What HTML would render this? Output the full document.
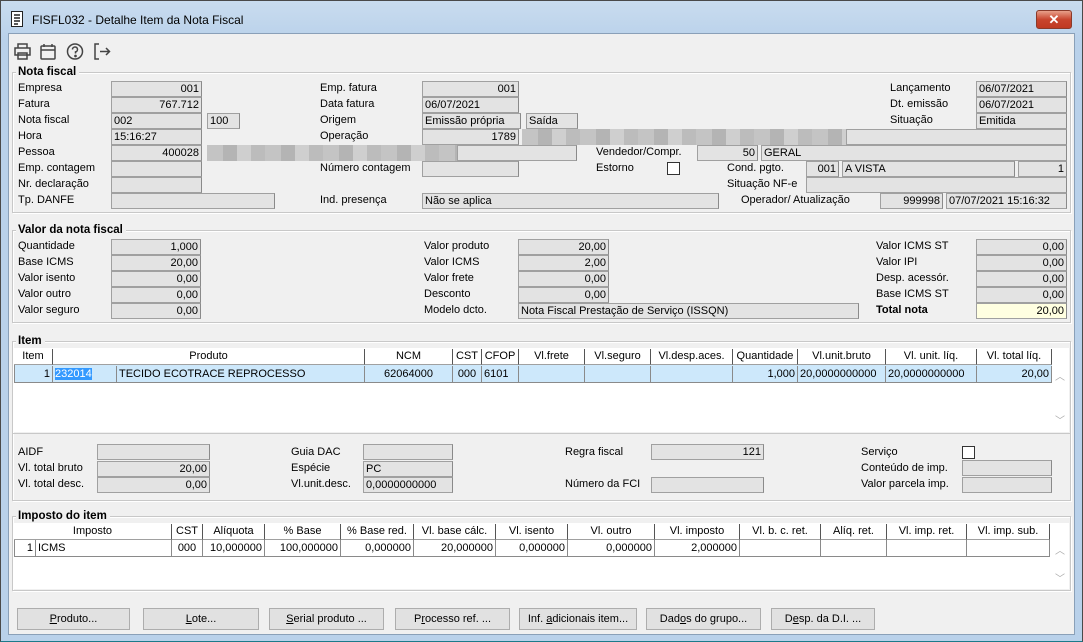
<!DOCTYPE html>
<html><head><meta charset="utf-8"><style>
*{box-sizing:border-box;margin:0;padding:0}
body{width:1083px;height:642px;overflow:hidden;background:#bcd4ec;font-family:"Liberation Sans",sans-serif;font-size:11px;color:#000;position:relative}
.win{position:absolute;left:0;top:0;width:1083px;height:642px;border:1px solid #4a4a4a;border-bottom-color:#1c7a8a;background:linear-gradient(#c9dcef,#b9d1ea 40px)}
.content{position:absolute;left:8px;top:33px;width:1067px;height:602px;background:#f0f0f0;border:1px solid #8aa0b8}
div.a{position:absolute;white-space:nowrap}
.l{position:absolute;white-space:nowrap;line-height:15px}
.f{position:absolute;height:16px;background:#e3e3e3;border:1px solid #a0a0a0;border-right-color:#8a8a8a;line-height:14px;padding:0 2px;white-space:nowrap;overflow:hidden}
.r{text-align:right}
.g{position:absolute;border:1px solid #c8c8c8;box-shadow:inset 1px 1px 0 #fff,1px 1px 0 #fff}
.gt{position:absolute;background:#f0f0f0;font-weight:bold;padding:0 3px 0 2px;line-height:13px;font-size:11.5px}
.tbl{position:absolute;background:#fff;border:1px solid #a0a0a0}
.h{position:absolute;height:16px;background:#fff;border-right:1px solid #555;border-bottom:1px solid #a0a0a0;text-align:center;line-height:15px;white-space:nowrap;overflow:hidden}
.c{position:absolute;height:17px;border-right:1px solid #8a8a8a;border-bottom:1px solid #8a8a8a;line-height:16px;padding:0 2px;white-space:nowrap;overflow:hidden}
.btn{position:absolute;top:608px;height:22px;background:#e1e1e1;border:1px solid #adadad;text-align:center;line-height:20px}
.cb{position:absolute;width:13px;height:13px;background:#fff;border:1px solid #333}
.blur{position:absolute;height:16px;background:repeating-linear-gradient(90deg,#c4c4c4 0 16px,#b4b4b4 16px 30px,#cfcfcf 30px 44px,#bcbcbc 44px 58px)}
</style></head><body>
<div class="win"></div>
<!-- title -->
<svg style="position:absolute;left:10px;top:11px" width="14" height="16" viewBox="0 0 14 16"><rect x="1.5" y="0.5" width="11" height="15" fill="#fff" stroke="#222"/><path d="M4 4h6M4 7h6M4 10h6M4 13h4" stroke="#222" stroke-width="1.4"/></svg>
<div class="a" style="left:32px;top:13px;font-size:12px">FISFL032 - Detalhe Item da Nota Fiscal</div>
<div class="a" style="left:1036px;top:10px;width:36px;height:19px;border:1px solid #8a3a2a;border-radius:3px;background:linear-gradient(#e8a08a,#c8452e 50%,#c03a22);color:#fff;text-align:center;font-weight:bold;font-size:13px;line-height:17px">✕</div>
<div class="content"></div>
<!-- toolbar -->
<svg style="position:absolute;left:13px;top:42px" width="100" height="19" viewBox="0 0 100 19" fill="none" stroke="#444" stroke-width="1.5">
<path d="M5 6V2h9v4M2 6h15v7H2zM5 11h9v6H5z"/>
<rect x="28" y="4" width="14" height="13" rx="1"/><path d="M28 8h14M31 2v3M39 2v3"/>
<circle cx="62" cy="9.5" r="7.5"/><path d="M59.5 7.5a2.5 2.5 0 1 1 3 2.4v1.6"/><circle cx="62.5" cy="14" r=".6" fill="#444"/>
<path d="M86 2h-4v15h4M87 9.5h9M93 6l3.5 3.5L93 13"/>
</svg>
<!-- Nota fiscal group -->
<div class="g" style="left:12px;top:72px;width:1059px;height:141px"></div>
<div class="gt" style="left:16px;top:66px">Nota fiscal</div>
<div class="l" style="left:18px;top:81px">Empresa</div>
<div class="l" style="left:18px;top:97px">Fatura</div>
<div class="l" style="left:18px;top:113px">Nota fiscal</div>
<div class="l" style="left:18px;top:129px">Hora</div>
<div class="l" style="left:18px;top:145px">Pessoa</div>
<div class="l" style="left:18px;top:161px">Emp. contagem</div>
<div class="l" style="left:18px;top:177px">Nr. declaração</div>
<div class="l" style="left:18px;top:193px">Tp. DANFE</div>
<div class="f r" style="left:111px;top:81px;width:91px">001</div>
<div class="f r" style="left:111px;top:97px;width:91px">767.712</div>
<div class="f" style="left:111px;top:113px;width:91px">002</div>
<div class="f" style="left:207px;top:113px;width:33px">100</div>
<div class="f" style="left:111px;top:129px;width:91px">15:16:27</div>
<div class="f r" style="left:111px;top:145px;width:91px">400028</div>
<div class="blur" style="left:207px;top:145px;width:250px"></div>
<div class="f" style="left:457px;top:145px;width:120px"></div>
<div class="f" style="left:111px;top:161px;width:91px"></div>
<div class="f" style="left:111px;top:177px;width:91px"></div>
<div class="f" style="left:111px;top:193px;width:164px"></div>
<div class="l" style="left:320px;top:81px">Emp. fatura</div>
<div class="l" style="left:320px;top:97px">Data fatura</div>
<div class="l" style="left:320px;top:113px">Origem</div>
<div class="l" style="left:320px;top:129px">Operação</div>
<div class="l" style="left:320px;top:161px">Número contagem</div>
<div class="l" style="left:320px;top:193px">Ind. presença</div>
<div class="f r" style="left:422px;top:81px;width:97px">001</div>
<div class="f" style="left:422px;top:97px;width:97px">06/07/2021</div>
<div class="f" style="left:422px;top:113px;width:99px">Emissão própria</div>
<div class="f" style="left:526px;top:113px;width:52px">Saída</div>
<div class="f r" style="left:422px;top:129px;width:97px">1789</div>
<div class="blur" style="left:522px;top:129px;width:324px"></div>
<div class="f" style="left:846px;top:129px;width:221px"></div>
<div class="f" style="left:422px;top:161px;width:97px"></div>
<div class="f" style="left:422px;top:193px;width:297px">Não se aplica</div>
<div class="l" style="left:596px;top:145px">Vendedor/Compr.</div>
<div class="f r" style="left:697px;top:145px;width:61px">50</div>
<div class="f" style="left:761px;top:145px;width:306px">GERAL</div>
<div class="l" style="left:596px;top:161px">Estorno</div>
<div class="cb" style="left:667px;top:162px"></div>
<div class="l" style="left:727px;top:161px">Cond. pgto.</div>
<div class="f r" style="left:806px;top:161px;width:33px">001</div>
<div class="f" style="left:842px;top:161px;width:173px">A VISTA</div>
<div class="f r" style="left:1018px;top:161px;width:49px">1</div>
<div class="l" style="left:727px;top:177px">Situação NF-e</div>
<div class="f" style="left:806px;top:177px;width:261px"></div>
<div class="l" style="left:741px;top:193px">Operador/ Atualização</div>
<div class="f r" style="left:880px;top:193px;width:63px">999998</div>
<div class="f" style="left:946px;top:193px;width:121px">07/07/2021 15:16:32</div>
<div class="l" style="left:890px;top:81px">Lançamento</div>
<div class="l" style="left:890px;top:97px">Dt. emissão</div>
<div class="l" style="left:890px;top:113px">Situação</div>
<div class="f" style="left:976px;top:81px;width:91px">06/07/2021</div>
<div class="f" style="left:976px;top:97px;width:91px">06/07/2021</div>
<div class="f" style="left:976px;top:113px;width:91px">Emitida</div>
<!-- Valor -->
<div class="g" style="left:12px;top:230px;width:1059px;height:93px"></div>
<div class="gt" style="left:16px;top:224px">Valor da nota fiscal</div>
<div class="l" style="left:18px;top:239px">Quantidade</div>
<div class="l" style="left:18px;top:255px">Base ICMS</div>
<div class="l" style="left:18px;top:271px">Valor isento</div>
<div class="l" style="left:18px;top:287px">Valor outro</div>
<div class="l" style="left:18px;top:303px">Valor seguro</div>
<div class="f r" style="left:111px;top:239px;width:90px">1,000</div>
<div class="f r" style="left:111px;top:255px;width:90px">20,00</div>
<div class="f r" style="left:111px;top:271px;width:90px">0,00</div>
<div class="f r" style="left:111px;top:287px;width:90px">0,00</div>
<div class="f r" style="left:111px;top:303px;width:90px">0,00</div>
<div class="l" style="left:424px;top:239px">Valor produto</div>
<div class="l" style="left:424px;top:255px">Valor ICMS</div>
<div class="l" style="left:424px;top:271px">Valor frete</div>
<div class="l" style="left:424px;top:287px">Desconto</div>
<div class="l" style="left:424px;top:303px">Modelo dcto.</div>
<div class="f r" style="left:518px;top:239px;width:91px">20,00</div>
<div class="f r" style="left:518px;top:255px;width:91px">2,00</div>
<div class="f r" style="left:518px;top:271px;width:91px">0,00</div>
<div class="f r" style="left:518px;top:287px;width:91px">0,00</div>
<div class="f" style="left:518px;top:303px;width:341px">Nota Fiscal Prestação de Serviço (ISSQN)</div>
<div class="l" style="left:876px;top:239px">Valor ICMS ST</div>
<div class="l" style="left:876px;top:255px">Valor IPI</div>
<div class="l" style="left:876px;top:271px">Desp. acessór.</div>
<div class="l" style="left:876px;top:287px">Base ICMS ST</div>
<div class="l" style="left:876px;top:303px;font-weight:bold">Total nota</div>
<div class="f r" style="left:976px;top:239px;width:91px">0,00</div>
<div class="f r" style="left:976px;top:255px;width:91px">0,00</div>
<div class="f r" style="left:976px;top:271px;width:91px">0,00</div>
<div class="f r" style="left:976px;top:287px;width:91px">0,00</div>
<div class="f r" style="left:976px;top:303px;width:91px;background:#ffffe1">20,00</div>
<!-- Item -->
<div class="g" style="left:12px;top:341px;width:1059px;height:160px"></div>
<div class="gt" style="left:16px;top:335px">Item</div>
<div class="tbl" style="left:14px;top:348px;width:1055px;height:84px;border:none"></div>
<div class="h" style="left:14px;top:349px;width:39px">Item</div>
<div class="h" style="left:53px;top:349px;width:312px">Produto</div>
<div class="h" style="left:365px;top:349px;width:88px">NCM</div>
<div class="h" style="left:453px;top:349px;width:29px">CST</div>
<div class="h" style="left:482px;top:349px;width:37px">CFOP</div>
<div class="h" style="left:519px;top:349px;width:66px">Vl.frete</div>
<div class="h" style="left:585px;top:349px;width:66px">Vl.seguro</div>
<div class="h" style="left:651px;top:349px;width:82px">Vl.desp.aces.</div>
<div class="h" style="left:733px;top:349px;width:65px">Quantidade</div>
<div class="h" style="left:798px;top:349px;width:88px">Vl.unit.bruto</div>
<div class="h" style="left:886px;top:349px;width:91px">Vl. unit. líq.</div>
<div class="h" style="left:977px;top:349px;width:75px">Vl. total líq.</div>
<div class="a" style="left:14px;top:365px;width:1038px;height:18px;background:#cde8fb;border-left:1px solid #8a8a8a"></div>
<div class="c r" style="left:15px;top:366px;width:38px">1</div>
<div class="c" style="left:53px;top:366px;width:64px"><span style="background:#3399ff;color:#fff">232014</span></div>
<div class="c" style="left:117px;top:366px;width:248px">TECIDO ECOTRACE REPROCESSO</div>
<div class="c" style="left:365px;top:366px;width:88px;text-align:center">62064000</div>
<div class="c" style="left:453px;top:366px;width:29px;text-align:center">000</div>
<div class="c" style="left:482px;top:366px;width:37px">6101</div>
<div class="c" style="left:519px;top:366px;width:66px"></div>
<div class="c" style="left:585px;top:366px;width:66px"></div>
<div class="c" style="left:651px;top:366px;width:82px"></div>
<div class="c r" style="left:733px;top:366px;width:65px">1,000</div>
<div class="c" style="left:798px;top:366px;width:88px">20,0000000000</div>
<div class="c" style="left:886px;top:366px;width:91px">20,0000000000</div>
<div class="c r" style="left:977px;top:366px;width:75px">20,00</div>
<div class="a" style="left:1055px;top:368px;color:#aaa;font-size:10px">︿</div>
<div class="a" style="left:1055px;top:412px;color:#aaa;font-size:10px">﹀</div>
<div class="a" style="left:12px;top:433px;width:1059px;height:1px;background:#c8c8c8"></div>
<div class="l" style="left:18px;top:445px">AIDF</div>
<div class="l" style="left:18px;top:461px">Vl. total bruto</div>
<div class="l" style="left:18px;top:477px">Vl. total desc.</div>
<div class="f" style="left:97px;top:444px;width:113px"></div>
<div class="f r" style="left:97px;top:461px;width:113px">20,00</div>
<div class="f r" style="left:97px;top:477px;width:113px">0,00</div>
<div class="l" style="left:291px;top:445px">Guia DAC</div>
<div class="l" style="left:291px;top:461px">Espécie</div>
<div class="l" style="left:291px;top:477px">Vl.unit.desc.</div>
<div class="f" style="left:363px;top:444px;width:90px"></div>
<div class="f" style="left:363px;top:461px;width:90px">PC</div>
<div class="f" style="left:363px;top:477px;width:90px">0,0000000000</div>
<div class="l" style="left:565px;top:445px">Regra fiscal</div>
<div class="l" style="left:565px;top:477px">Número da FCI</div>
<div class="f r" style="left:651px;top:444px;width:113px">121</div>
<div class="f" style="left:651px;top:477px;width:113px"></div>
<div class="l" style="left:861px;top:445px">Serviço</div>
<div class="l" style="left:861px;top:461px">Conteúdo de imp.</div>
<div class="l" style="left:861px;top:477px">Valor parcela imp.</div>
<div class="cb" style="left:962px;top:446px"></div>
<div class="f" style="left:962px;top:460px;width:90px"></div>
<div class="f" style="left:962px;top:477px;width:90px"></div>
<!-- Imposto -->
<div class="g" style="left:12px;top:516px;width:1059px;height:75px"></div>
<div class="gt" style="left:16px;top:510px">Imposto do item</div>
<div class="tbl" style="left:14px;top:523px;width:1055px;height:66px;border:none"></div>
<div class="h" style="left:14px;top:524px;width:158px">Imposto</div>
<div class="h" style="left:172px;top:524px;width:31px">CST</div>
<div class="h" style="left:203px;top:524px;width:62px">Alíquota</div>
<div class="h" style="left:265px;top:524px;width:76px">% Base</div>
<div class="h" style="left:341px;top:524px;width:73px">% Base red.</div>
<div class="h" style="left:414px;top:524px;width:82px">Vl. base cálc.</div>
<div class="h" style="left:496px;top:524px;width:72px">Vl. isento</div>
<div class="h" style="left:568px;top:524px;width:87px">Vl. outro</div>
<div class="h" style="left:655px;top:524px;width:85px">Vl. imposto</div>
<div class="h" style="left:740px;top:524px;width:81px">Vl. b. c. ret.</div>
<div class="h" style="left:821px;top:524px;width:66px">Alíq. ret.</div>
<div class="h" style="left:887px;top:524px;width:80px">Vl. imp. ret.</div>
<div class="h" style="left:967px;top:524px;width:83px">Vl. imp. sub.</div>
<div class="a" style="left:14px;top:540px;width:1036px;height:17px;border-left:1px solid #8a8a8a"></div>
<div class="c r" style="left:15px;top:540px;width:21px">1</div>
<div class="c" style="left:36px;top:540px;width:136px">ICMS</div>
<div class="c" style="left:172px;top:540px;width:31px;text-align:center">000</div>
<div class="c r" style="left:203px;top:540px;width:62px">10,000000</div>
<div class="c r" style="left:265px;top:540px;width:76px">100,000000</div>
<div class="c r" style="left:341px;top:540px;width:73px">0,000000</div>
<div class="c r" style="left:414px;top:540px;width:82px">20,000000</div>
<div class="c r" style="left:496px;top:540px;width:72px">0,000000</div>
<div class="c r" style="left:568px;top:540px;width:87px">0,000000</div>
<div class="c r" style="left:655px;top:540px;width:85px">2,000000</div>
<div class="c" style="left:740px;top:540px;width:81px"></div>
<div class="c" style="left:821px;top:540px;width:66px"></div>
<div class="c" style="left:887px;top:540px;width:80px"></div>
<div class="c" style="left:967px;top:540px;width:83px"></div>
<div class="a" style="left:1055px;top:542px;color:#aaa;font-size:10px">︿</div>
<div class="a" style="left:1055px;top:570px;color:#aaa;font-size:10px">﹀</div>
<!-- buttons -->
<div class="btn" style="left:17px;width:113px"><u>P</u>roduto...</div>
<div class="btn" style="left:143px;width:116px"><u>L</u>ote...</div>
<div class="btn" style="left:269px;width:115px"><u>S</u>erial produto ...</div>
<div class="btn" style="left:395px;width:115px">P<u>r</u>ocesso ref. ...</div>
<div class="btn" style="left:519px;width:118px">Inf. <u>a</u>dicionais item...</div>
<div class="btn" style="left:646px;width:115px">Dad<u>o</u>s do grupo...</div>
<div class="btn" style="left:771px;width:104px">D<u>e</u>sp. da D.I. ...</div>
</body></html>
